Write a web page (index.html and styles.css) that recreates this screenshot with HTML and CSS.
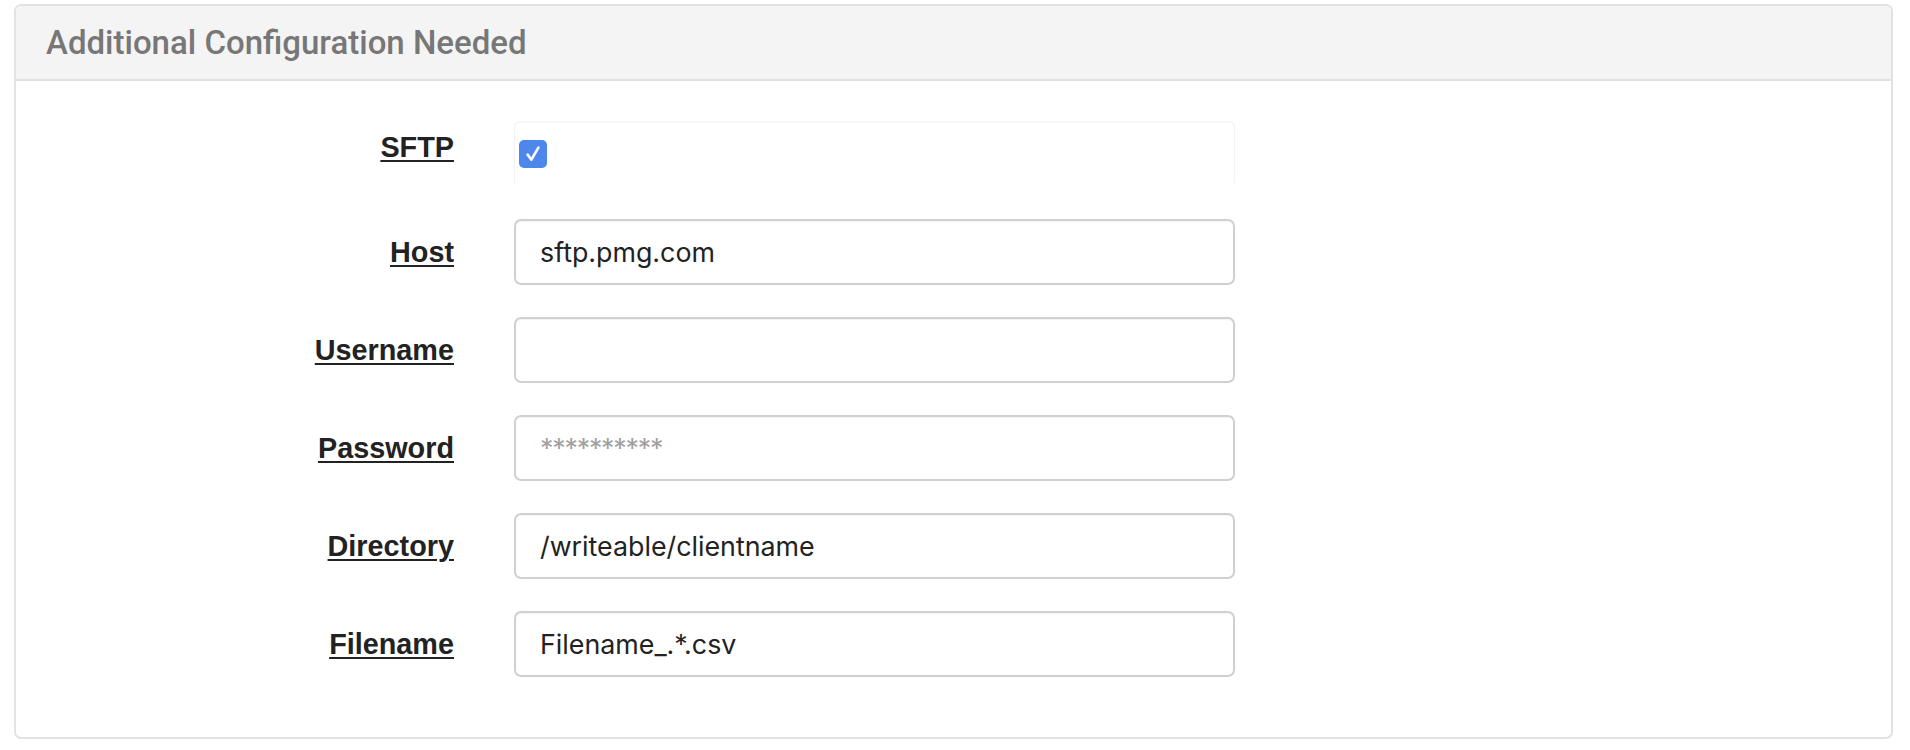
FILE: index.html
```html
<!DOCTYPE html>
<html lang="en">
<head>
<meta charset="utf-8">
<title>Additional Configuration Needed</title>
<link rel="stylesheet" href="styles.css">
</head>
<body>
<div class="page">
  <section class="panel">
    <header class="panel-heading">
      <h3 class="panel-title">Additional Configuration Needed</h3>
    </header>
    <form class="panel-body">
      <div class="form-row">
        <label class="control-label control-label--check"><abbr title="Secure File Transfer Protocol">SFTP</abbr></label>
        <div class="check-box-wrap">
          <span class="checkbox" role="checkbox" aria-checked="true">
            <svg viewBox="0 0 28 28" width="28" height="28"><path d="M8.6 14.6 L12.4 19.6 L19.4 7.6" fill="none" stroke="#fff" stroke-width="2.6" stroke-linecap="round" stroke-linejoin="round"/></svg>
          </span>
        </div>
      </div>
      <div class="form-row">
        <label class="control-label"><abbr title="Host">Host</abbr></label>
        <input class="form-control" type="text" value="sftp.pmg.com">
      </div>
      <div class="form-row">
        <label class="control-label"><abbr title="Username">Username</abbr></label>
        <input class="form-control" type="text" value="">
      </div>
      <div class="form-row">
        <label class="control-label"><abbr title="Password">Password</abbr></label>
        <input class="form-control" type="text" placeholder="**********">
      </div>
      <div class="form-row">
        <label class="control-label"><abbr title="Directory">Directory</abbr></label>
        <input class="form-control" type="text" value="/writeable/clientname">
      </div>
      <div class="form-row">
        <label class="control-label"><abbr title="Filename">Filename</abbr></label>
        <input class="form-control" type="text" value="Filename_.*.csv">
      </div>
    </form>
  </section>
</div>
</body>
</html>
```

FILE: styles.css
```css
html, body {
  margin: 0;
  padding: 0;
  background: #ffffff;
}

.page {
  padding: 4px 17px 11px 14px;
}

.panel {
  border: 2px solid #e2e2e2;
  border-radius: 7px;
  background: #fff;
  overflow: hidden;
}

.panel-heading {
  height: 73px;
  display: flex;
  align-items: center;
  padding-left: 30px;
  background: #f4f4f4;
  border-bottom: 2px solid #e0e0e0;
}

.panel-title {
  margin: 0;
  font-family: Roboto, "Liberation Sans", sans-serif;
  font-weight: 500;
  font-size: 33px;
  color: #777777;
}

.panel-body {
  display: flex;
  flex-direction: column;
  gap: 32px;
  padding: 40px 0 60px 0;
}

.form-row {
  display: grid;
  grid-template-columns: 438px 721px;
  column-gap: 60px;
  height: 66px;
}

.control-label {
  justify-self: end;
  align-self: start;
  padding-top: 17px;
  line-height: 32px;
  font-family: "Liberation Sans", Arial, sans-serif;
  font-weight: 700;
  font-size: 28.8px;
  color: #222222;
}

.control-label--check {
  padding-top: 10px;
}

.control-label abbr {
  text-decoration: underline;
  text-decoration-thickness: 2px;
  text-underline-offset: 3px;
  cursor: help;
}

.check-box-wrap {
  display: flex;
  align-items: center;
  padding-left: 4px;
  border: 1px solid #f2f2f2;
  border-bottom-color: #ffffff;
  border-radius: 6px;
  box-shadow: inset 0 1px 1px rgba(0, 0, 0, 0.03);
}

.checkbox {
  width: 28px;
  height: 28px;
  border-radius: 5px;
  background: #4d87ec;
  display: block;
}

.checkbox svg {
  display: block;
}

.form-control {
  box-sizing: border-box;
  width: 721px;
  height: 66px;
  margin: 0;
  padding: 0 24px;
  border: 2px solid #d0d0d0;
  border-radius: 7px;
  box-shadow: inset 0 1px 1px rgba(0, 0, 0, 0.05);
  background: #fff;
  font-family: Inter, "Liberation Sans", sans-serif;
  font-size: 26.8px;
  color: #222222;
  outline: none;
}

.form-control::placeholder {
  color: #a0a0a0;
  letter-spacing: -1.2px;
}
```
